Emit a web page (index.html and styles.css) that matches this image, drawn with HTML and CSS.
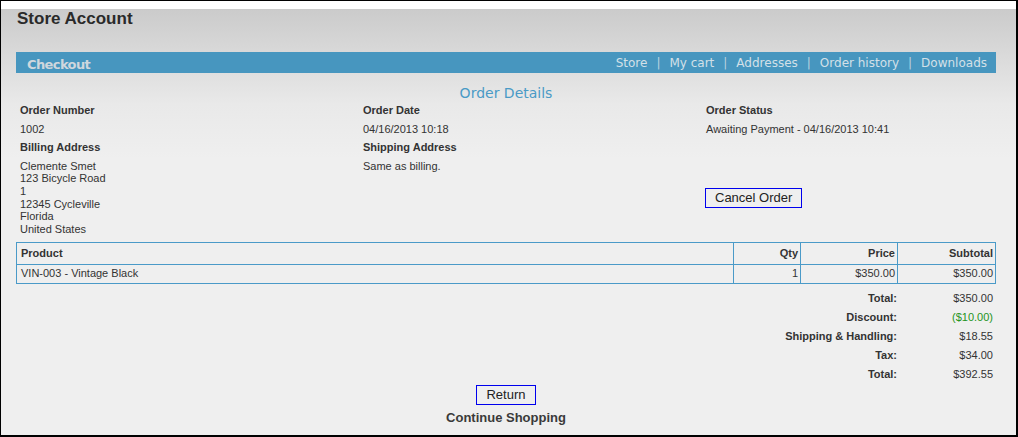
FILE: index.html
```html
<!DOCTYPE html>
<html lang="en">
<head>
<meta charset="utf-8">
<title>Store Account</title>
<link rel="stylesheet" href="styles.css">
</head>
<body>
<div class="window">
  <div class="top-strip"></div>
  <main class="page">
    <h1 class="page-title">Store Account</h1>
    <div class="bar">
      <span class="bar-title">Checkout</span>
      <nav class="nav">
        <a class="nav-link">Store</a><span class="nav-sep">|</span>
        <a class="nav-link">My cart</a><span class="nav-sep">|</span>
        <a class="nav-link">Addresses</a><span class="nav-sep">|</span>
        <a class="nav-link">Order history</a><span class="nav-sep">|</span>
        <a class="nav-link">Downloads</a>
      </nav>
    </div>
    <h2 class="section-title">Order Details</h2>
    <div class="info">
      <div class="info-label">Order Number</div>
      <div class="info-label">Order Date</div>
      <div class="info-label">Order Status</div>
      <div class="info-value">1002</div>
      <div class="info-value">04/16/2013 10:18</div>
      <div class="info-value">Awaiting Payment - 04/16/2013 10:41</div>
      <div class="info-label">Billing Address</div>
      <div class="info-label">Shipping Address</div>
      <div class="info-label"></div>
      <div class="info-value">Clemente Smet<br>123 Bicycle Road<br>1<br>12345 Cycleville<br>Florida<br>United States</div>
      <div class="info-value">Same as billing.</div>
      <div class="info-action"><button class="btn" type="button">Cancel Order</button></div>
    </div>
    <table class="items">
      <thead>
        <tr>
          <th class="col-product">Product</th>
          <th class="col-qty">Qty</th>
          <th class="col-price">Price</th>
          <th class="col-sub">Subtotal</th>
        </tr>
      </thead>
      <tbody>
        <tr>
          <td class="col-product">VIN-003 - Vintage Black</td>
          <td class="col-qty">1</td>
          <td class="col-price">$350.00</td>
          <td class="col-sub">$350.00</td>
        </tr>
      </tbody>
    </table>
    <div class="totals">
      <div class="total-label">Total:</div><div class="total-value">$350.00</div>
      <div class="total-label">Discount:</div><div class="total-value discount">($10.00)</div>
      <div class="total-label">Shipping &amp; Handling:</div><div class="total-value">$18.55</div>
      <div class="total-label">Tax:</div><div class="total-value">$34.00</div>
      <div class="total-label">Total:</div><div class="total-value">$392.55</div>
    </div>
    <div class="actions">
      <button class="btn" type="button">Return</button>
      <div class="continue">Continue Shopping</div>
    </div>
  </main>
</div>
</body>
</html>
```

FILE: styles.css
```css
* { box-sizing: border-box; }

html, body {
  margin: 0;
  padding: 0;
  background: #ffffff;
}

.window {
  width: 1018px;
  height: 437px;
  border-top: 1px solid #000;
  border-left: 1px solid #000;
  border-right: 2px solid #000;
  border-bottom: 2px solid #000;
  overflow: hidden;
  display: flex;
  flex-direction: column;
  font-family: "Liberation Sans", Arial, sans-serif;
  color: #333;
}

.top-strip {
  height: 8px;
  flex: none;
  background: #fff;
}

.page {
  flex: 1;
  padding: 0 20px 0 15px;
  background: linear-gradient(#cbcbcb 0px, #e9e9e9 95px, #efefef 150px, #efefef 100%);
}

.page-title {
  margin: 0 0 0 1px;
  font-size: 17px;
  line-height: 19px;
  font-weight: bold;
  color: #2a2a2a;
}

.bar {
  margin-top: 24px;
  height: 21px;
  background: #4796bf;
  display: flex;
  align-items: center;
  justify-content: space-between;
  padding: 0 9px 0 11px;
  font-family: "DejaVu Sans", Verdana, sans-serif;
}

.bar-title {
  font-size: 13px;
  font-weight: bold;
  letter-spacing: -0.6px;
  color: #cfd7dd;
  padding-top: 4px;
}

.nav {
  display: flex;
  align-items: center;
  font-size: 12px;
  color: #d3e0e8;
}

.nav-link {
  color: #d3e0e8;
  text-decoration: none;
}

.nav-sep {
  margin: 0 9px;
  color: #bcd2df;
}

.section-title {
  margin: 12px 0 0;
  font-family: "DejaVu Sans", Verdana, sans-serif;
  font-size: 14px;
  line-height: 16px;
  font-weight: normal;
  text-align: center;
  color: #4a9ac6;
}

.info {
  display: grid;
  grid-template-columns: 343px 343px 1fr;
  font-size: 11px;
  line-height: 12.6px;
}

.info-label {
  padding: 3px 4px;
  font-weight: bold;
  min-height: 18.6px;
}

.info-value {
  padding: 3px 4px;
}

.info-action {
  align-self: center;
  padding-left: 3px;
}

.btn {
  font-family: "Liberation Sans", Arial, sans-serif;
  font-size: 13px;
  color: #222;
  background: transparent;
  border: 1px solid #0000ee;
  height: 20px;
  line-height: 18px;
  padding: 0 9px;
  margin: 0;
  border-radius: 0;
}

.items {
  width: 100%;
  margin-top: 4px;
  border-collapse: collapse;
  font-size: 11px;
  line-height: 12.6px;
  border: 1px solid #4a9ac8;
}

.items th,
.items td {
  border: 1px solid #4a9ac8;
  text-align: right;
  padding: 2px 2px 3px 4px;
}

.items th {
  font-weight: bold;
  padding-top: 4px;
  padding-bottom: 4px;
}

.items .col-product { text-align: left; }
.items .col-qty { width: 67px; }
.items .col-price { width: 97px; }
.items .col-sub { width: 98px; }

.totals {
  margin-top: 5px;
  display: grid;
  grid-template-columns: 1fr 96px;
  font-size: 11px;
  line-height: 13px;
}

.total-label {
  font-weight: bold;
  text-align: right;
  padding: 3px 3px 3px 0;
}

.total-value {
  text-align: right;
  padding: 3px 3px 3px 0;
}

.discount { color: #1f9322; }

.actions {
  margin-top: 1px;
  display: flex;
  flex-direction: column;
  align-items: center;
}

.continue {
  margin-top: 5px;
  font-size: 13px;
  font-weight: bold;
  color: #3a3a3a;
}
```
